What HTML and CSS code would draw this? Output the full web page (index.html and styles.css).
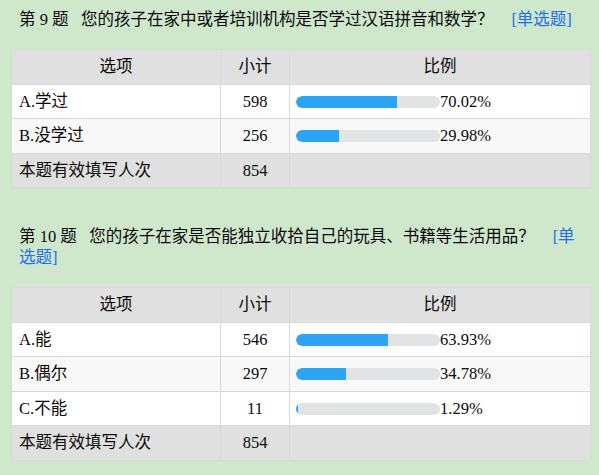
FILE: index.html
```html
<!DOCTYPE html>
<html lang="zh-CN">
<head>
<meta charset="utf-8">
<title>统计</title>
<link rel="stylesheet" href="styles.css">
</head>
<body>
<div class="page">
  <div class="question">
    <div class="q-title">第 9 题&nbsp;&nbsp;&nbsp;您的孩子在家中或者培训机构是否学过汉语拼音和数学？<a class="q-type">[单选题]</a></div>
    <table class="stat">
      <thead>
        <tr><th class="c-opt">选项</th><th class="c-num">小计</th><th class="c-pct">比例</th></tr>
      </thead>
      <tbody>
        <tr class="row"><td class="opt">A.学过</td><td class="num">598</td><td class="pct"><span class="bar"><span class="fill" style="width:70.02%"></span></span>70.02%</td></tr>
        <tr class="row alt"><td class="opt">B.没学过</td><td class="num">256</td><td class="pct"><span class="bar"><span class="fill" style="width:29.98%"></span></span>29.98%</td></tr>
        <tr class="total"><td class="opt">本题有效填写人次</td><td class="num">854</td><td class="pct"></td></tr>
      </tbody>
    </table>
  </div>
  <div class="question">
    <div class="q-title">第 10 题&nbsp;&nbsp;&nbsp;您的孩子在家是否能独立收拾自己的玩具、书籍等生活用品？<a class="q-type">[单选题]</a></div>
    <table class="stat">
      <thead>
        <tr><th class="c-opt">选项</th><th class="c-num">小计</th><th class="c-pct">比例</th></tr>
      </thead>
      <tbody>
        <tr class="row"><td class="opt">A.能</td><td class="num">546</td><td class="pct"><span class="bar"><span class="fill" style="width:63.93%"></span></span>63.93%</td></tr>
        <tr class="row alt"><td class="opt">B.偶尔</td><td class="num">297</td><td class="pct"><span class="bar"><span class="fill" style="width:34.78%"></span></span>34.78%</td></tr>
        <tr class="row"><td class="opt">C.不能</td><td class="num">11</td><td class="pct"><span class="bar"><span class="fill" style="width:1.29%"></span></span>1.29%</td></tr>
        <tr class="total"><td class="opt">本题有效填写人次</td><td class="num">854</td><td class="pct"></td></tr>
      </tbody>
    </table>
  </div>
</div>
</body>
</html>
```
FILE: styles.css
```css
html, body {
  margin: 0;
  padding: 0;
  background: #cfe8cc;
}
body {
  font-family: "Liberation Serif", "Noto Sans CJK SC", serif;
  font-size: 16.5px;
  color: #0a0a0a;
}
.page {
  padding: 9px 8px 0 11px;
}
.question + .question {
  margin-top: 38px;
}
.q-title {
  line-height: 21px;
  padding: 0 12px 0 8px;
}
.q-type {
  color: #1a6ff0;
  margin-left: 18px;
  cursor: pointer;
}
.stat {
  margin-top: 19px;
  width: 580px;
  border-collapse: collapse;
  border: 1px solid #d6d6d6;
  table-layout: fixed;
}
.stat th, .stat td {
  border: 1px solid #d9d9d9;
  padding: 6px 7px;
  line-height: 21.5px;
  font-weight: normal;
  text-align: left;
}
.stat th {
  background: #e0e0e0;
  text-align: center;
}
.c-opt { width: 194px; }
.c-num { width: 54px; }
.row td { background: #ffffff; }
.row.alt td { background: #f8f8f8; }
.total td { background: #e0e0e0; }
.stat td.num { text-align: center; }
.stat td.pct { padding-left: 6px; }
.bar {
  display: inline-block;
  width: 144px;
  height: 12px;
  border-radius: 6px;
  background: #e2e3e5;
  vertical-align: -1px;
  overflow: hidden;
}
.fill {
  display: block;
  height: 100%;
  background: #2da4f3;
  border-radius: 6px 0 0 6px;
}
```
